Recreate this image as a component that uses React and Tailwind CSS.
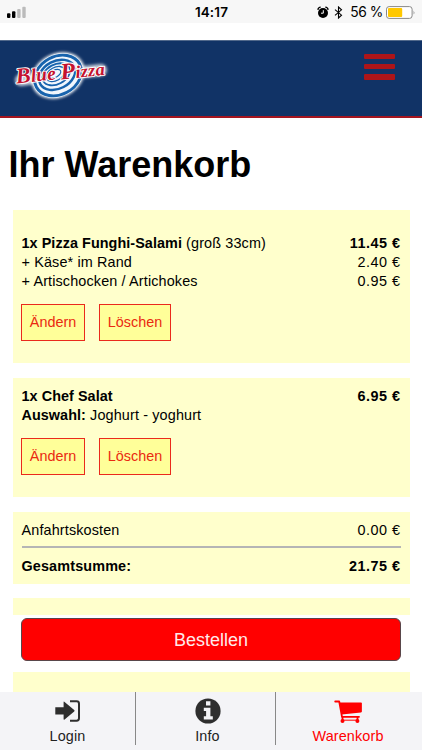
import { clsx } from 'clsx'

const items = [
  {
    name: '1x Pizza Funghi-Salami',
    size: '(groß 33cm)',
    price: '11.45 €',
    extras: [
      { label: '+ Käse* im Rand', price: '2.40 €' },
      { label: '+ Artischocken / Artichokes', price: '0.95 €' },
    ],
    cls: 'h-[153px] pt-[24px]',
  },
  {
    name: '1x Chef Salat',
    price: '6.95 €',
    choice: 'Joghurt - yoghurt',
    extras: [],
    cls: 'h-[119px] pt-[9px]',
  },
]

function StatusBar() {
  return (
    <div className="h-[23px] shrink-0 grid grid-cols-3 items-center bg-[#f7f7f7] font-['Inter',sans-serif] text-black">
      <svg width="28" height="23" viewBox="0 0 28 23">
        <rect x="7" y="12.2" width="3.4" height="4.8" rx="1" />
        <rect x="12" y="10.2" width="3.4" height="6.8" rx="1" />
        <rect x="17.2" y="8" width="3.4" height="9" rx="1" fill="#bbb" />
        <rect x="22.3" y="5.7" width="3.4" height="11.3" rx="1" fill="#bbb" />
      </svg>
      <span className="pt-[1px] pl-[1px] text-center text-[13.5px] font-semibold leading-[23px]">14:17</span>
      <div className="flex items-center justify-end pr-[8px]">
        {/* alarm */}
        <svg width="12" height="13" viewBox="0 0 12 13" className="mr-[5px]">
          <circle cx="6" cy="7" r="5" />
          <path d="M.9 3.8A3 3 0 0 1 3.7 1.2M8.3 1.2a3 3 0 0 1 2.8 2.6" fill="none" stroke="#000" strokeWidth="1.3" />
          <path d="M6.3 4.2v3H4" fill="none" stroke="#fff" strokeWidth="1" />
        </svg>
        {/* bluetooth */}
        <svg width="9" height="13" viewBox="0 0 9 13" className="mr-[7px]">
          <path d="M1 3.7l6.5 5.5-3 2.8V1l3 2.8L1 9.3" fill="none" stroke="#000" strokeWidth="1.1" />
        </svg>
        <span className="mr-[3px] pt-[1px] text-[13.8px] tracking-[-0.4px] leading-[23px] whitespace-nowrap">56 %</span>
        <svg width="30" height="13" viewBox="0 0 30 13" className="-mr-[2px]">
          <rect x=".5" y=".6" width="25.6" height="11.8" rx="2.6" fill="#fff" stroke="#888" strokeWidth="1" />
          <rect x="2" y="2.1" width="14.2" height="8.8" rx="1" fill="#ffc800" />
          <path d="M27.6 4.5q1.5 2 0 4z" fill="#888" />
        </svg>
      </div>
    </div>
  )
}

function Logo() {
  return (
    <svg width="116" height="75" viewBox="0 40 116 75" className="block">
      <defs>
        <filter id="glow" x="-20%" y="-30%" width="140%" height="160%">
          <feGaussianBlur stdDeviation="1.5" />
        </filter>
      </defs>
      <g filter="url(#glow)" fill="#fff" stroke="#fff">
        <ellipse cx="58" cy="74.5" rx="27" ry="21" transform="rotate(-28 58 74.5)" strokeWidth="1.5" />
        <path d="M21 79L48 75L101 69" strokeWidth="12" strokeLinecap="round" fill="none" opacity=".75" />
      </g>
      <g transform="rotate(-28 58 74.5)">
        <ellipse cx="58" cy="74.5" rx="26.5" ry="21" fill="#f0f6fc" />
        <g fill="none" stroke="#1763ad">
          <ellipse cx="58" cy="74.5" rx="24.5" ry="19" strokeWidth="2.9" />
          <ellipse cx="57.5" cy="73.5" rx="19.2" ry="13.8" strokeWidth="2.4" />
          <ellipse cx="57" cy="72.6" rx="14.6" ry="9.8" strokeWidth="1.8" />
          <ellipse cx="56.5" cy="72" rx="10.4" ry="6.5" strokeWidth="1.3" />
          <ellipse cx="56" cy="71.5" rx="6.5" ry="3.6" strokeWidth="1.1" />
        </g>
      </g>
      <g
        className="font-['Liberation_Serif',serif] font-bold italic"
        fill="#c4122f"
        stroke="#fff"
        strokeWidth="1.8"
        strokeLinejoin="round"
        paintOrder="stroke"
      >
        <text x="16.5" y="82.5" fontSize="19" textLength="40" lengthAdjust="spacingAndGlyphs" transform="rotate(-6 16.5 82.5)">
          <tspan fontSize="22">B</tspan>lue
        </text>
        <text x="61" y="78.5" fontSize="17.5" textLength="44.5" lengthAdjust="spacingAndGlyphs" transform="rotate(-6 61 78.5)">
          <tspan fontSize="23">P</tspan>izza
        </text>
      </g>
    </svg>
  )
}

function Header() {
  return (
    <header className="mt-[17px] h-[78px] shrink-0 flex items-start justify-between bg-[#113366] border-t border-t-[#52698b] border-b-2 border-b-[#a5151f]">
      <Logo />
      <button className="mt-[12.5px] mr-[27px] flex flex-col gap-[4.8px]" aria-label="Menü">
        <span className="w-[31px] h-[5.6px] rounded-[1px] bg-[#ad1519]" />
        <span className="w-[31px] h-[5.6px] rounded-[1px] bg-[#ad1519]" />
        <span className="w-[31px] h-[5.6px] rounded-[1px] bg-[#ad1519]" />
      </button>
    </header>
  )
}

function SmallButton({ className, children }) {
  return (
    <button
      className={clsx('h-[37px] border border-[#ea2a1c] bg-[#ffff99] text-[#ea2a10] text-[14.4px] tracking-normal', className)}
    >
      {children}
    </button>
  )
}

function Price({ children }) {
  return <span className="tracking-[0.5px] whitespace-nowrap">{children}</span>
}

function CartItem({ item }) {
  return (
    <section className={clsx('bg-[#ffffcc] pl-[8.5px] pr-[9px]', item.cls)}>
      <div className="flex justify-between">
        <p>
          <b className="tracking-[0.06px]">{item.name}</b> {item.size}
        </p>
        <b className="flex">
          <Price>{item.price}</Price>
        </b>
      </div>
      {item.extras.map((e) => (
        <div key={e.label} className="flex justify-between">
          <p>{e.label}</p>
          <Price>{e.price}</Price>
        </div>
      ))}
      {item.choice && (
        <p>
          <b className="tracking-[0.06px]">Auswahl:</b> {item.choice}
        </p>
      )}
      <div className="mt-[13px] -ml-[0.5px] flex gap-[14px]">
        <SmallButton className="w-[64px]">Ändern</SmallButton>
        <SmallButton className="w-[72px]">Löschen</SmallButton>
      </div>
    </section>
  )
}

function LoginIcon() {
  return (
    <svg width="26" height="22" viewBox="0 0 26 22" fill="#2e2e2e">
      <path d="M.3 7.2H8.6V2.2q0-1.2 1-.3l9.6 8q.8.8 0 1.6l-9.6 8q-1 .8-1-.4V14.6H.3z" />
      <path d="M15 1.3h6.6q2.4 0 2.4 2.4v14.6q0 2.4-2.4 2.4H15" fill="none" stroke="#2e2e2e" strokeWidth="2" />
    </svg>
  )
}

function InfoIcon() {
  return (
    <svg width="26" height="26" viewBox="0 0 26 26">
      <circle cx="13" cy="13" r="12.6" fill="#2e2e2e" />
      <path d="M11 3.2h4.4v4.3H11zM8.8 9.8h6.6v8.4h2.4v3.2H8.8v-3.2h2.3v-5.2H8.8z" fill="#f4f4f7" />
    </svg>
  )
}

function CartIcon() {
  return (
    <svg width="28" height="24" viewBox="0 0 28 24" fill="#f00">
      <path d="M1.2 2.5H5.2L8 17.8H25" fill="none" stroke="#f00" strokeWidth="1.8" strokeLinecap="round" strokeLinejoin="round" />
      <path d="M5.6 3.6H27q.9 0 .9.9v8q0 .8-.9.9L7.6 15.4z" />
      <path d="M7.6 18h1.8v3H7.6zM22.6 18h1.8v3h-1.8z" />
      <circle cx="8.5" cy="21.9" r="2" />
      <circle cx="23.4" cy="21.9" r="2" />
      <path d="M8.5 21.2H23" stroke="#f00" strokeWidth="1" />
    </svg>
  )
}

const tabs = [
  { label: 'Login', icon: LoginIcon, cls: 'border-r border-[#888] text-[#222]' },
  { label: 'Info', icon: InfoIcon, cls: 'pl-[4px] border-r border-[#888] text-[#222]' },
  { label: 'Warenkorb', icon: CartIcon, cls: 'pr-[2px] text-[#f00]' },
]

function TabBar() {
  return (
    <nav className="h-[58px] shrink-0 grid grid-cols-[136px_140px_146px] bg-[#f4f4f7]">
      {tabs.map(({ label, icon: Icon, cls }) => (
        <a key={label} className={clsx('h-[53px] flex flex-col items-center text-[14.4px] leading-[17px]', cls)}>
          <span className="h-[39px] pt-[2px] flex items-center justify-center">
            <Icon />
          </span>
          {label}
        </a>
      ))}
    </nav>
  )
}

export default function App() {
  return (
    <div className="w-[422px] h-[750px] overflow-hidden flex flex-col bg-white text-black font-['Liberation_Sans',Arial,sans-serif] text-[14.4px] leading-[19px] tracking-[0.14px]">
      <StatusBar />
      <Header />
      <main className="flex-1 min-h-0 overflow-hidden pl-[13px] pr-[12.5px]">
        <h1 className="mt-[26px] -ml-[4.5px] h-[42px] mb-[24px] text-[36px] leading-[42px] font-bold tracking-normal">
          Ihr Warenkorb
        </h1>
        <div className="flex flex-col gap-[15px]">
          {items.map((item) => (
            <CartItem key={item.name} item={item} />
          ))}
          <section className="h-[71.5px] bg-[#ffffcc] pl-[8.5px] pr-[9px] pt-[9px]">
            <div className="flex justify-between">
              <p>Anfahrtskosten</p>
              <Price>0.00 €</Price>
            </div>
            <hr className="mt-[6px] mb-[9px] h-[1.5px] border-0 bg-[#b5b5b5]" />
            <div className="flex justify-between font-bold">
              <p>Gesamtsumme:</p>
              <Price>21.75 €</Price>
            </div>
          </section>
        </div>
        <div className="mt-[14px] h-[17px] bg-[#ffffcc]" />
        <button className="block mt-[3.5px] ml-[8px] w-[380px] h-[43px] rounded-[6px] border border-[#59464a] bg-[#f00] pt-[1px] text-[18px] text-[#ffeaea] tracking-normal">
          Bestellen
        </button>
        <div className="mt-[11px] h-[30px] bg-[#ffffcc]" />
      </main>
      <TabBar />
    </div>
  )
}
